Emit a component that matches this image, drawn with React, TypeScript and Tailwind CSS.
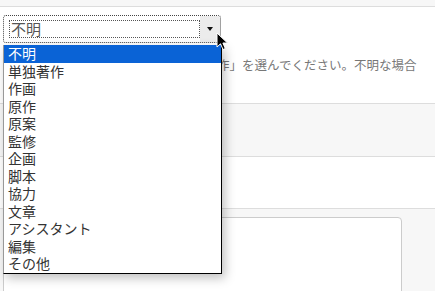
import React from "react";

const options = [
  "不明",
  "単独著作",
  "作画",
  "原作",
  "原案",
  "監修",
  "企画",
  "脚本",
  "協力",
  "文章",
  "アシスタント",
  "編集",
  "その他",
];

const font = "font-['Hiragino_Sans','Noto_Sans_CJK_JP',sans-serif]";

function Cursor() {
  return (
    <svg width="13" height="19" viewBox="0 0 13 19" className="absolute left-[216px] top-[32px]">
      <path
        d="M1 1 L1 15 L4.5 11.8 L7 17.5 L9.3 16.5 L6.9 11 L11.5 11 Z"
        fill="#000"
        stroke="#fff"
        strokeWidth="1"
        strokeLinejoin="round"
      />
    </svg>
  );
}

export default function App() {
  return (
    <div className={`relative h-[291px] w-[435px] overflow-hidden bg-[#f7f7f7] ${font}`}>
      <div className="h-[7px] border-b border-[#dddddd] bg-[#f7f7f7]" />

      <section className="h-[97px] border-b border-[#dddddd] bg-white pt-[8px]">
        <div className="relative ml-[3px] flex h-[28px] w-[218px] items-center rounded-[3px] border border-dotted border-[#444] bg-white">
          <div className="ml-[5px] flex h-[18px] w-[191px] items-center border border-dotted border-[#555] pl-[1px] text-[15px] text-[#555]">
            不明
          </div>
          <div className="flex h-full flex-1 items-center justify-center rounded-r-[3px] bg-[#ececec]">
            <span className="block h-0 w-0 border-x-[3.5px] border-t-[4px] border-x-transparent border-t-[#111]" />
          </div>
        </div>
        <p className="mt-[14px] whitespace-nowrap pl-[217px] text-[12.5px] leading-[16px] text-[#777]">
          作」を選んでください。不明な場合
        </p>
      </section>

      <section className="h-[53px] border-b border-[#dddddd] bg-[#f7f7f7]" />
      <section className="h-[52px] border-b border-[#dddddd] bg-white" />

      <section className="pt-[8px]">
        <div className="ml-[3px] h-[90px] w-[399px] rounded-[4px] border border-[#cccccc] bg-white" />
      </section>

      <ul className="absolute left-[3px] top-[45px] w-[219px] border-b border-l border-r border-b-black border-l-[#999] border-r-black bg-white shadow-[3px_4px_10px_rgba(0,0,0,0.25)]">
        {options.map((o, i) => (
          <li
            key={o}
            className={`h-[17.5px] pl-[4px] text-[14px] leading-[17.5px] ${
              i === 0 ? "bg-[#0a63d6] text-white" : "text-[#333]"
            }`}
          >
            {o}
          </li>
        ))}
      </ul>

      <Cursor />
    </div>
  );
}
